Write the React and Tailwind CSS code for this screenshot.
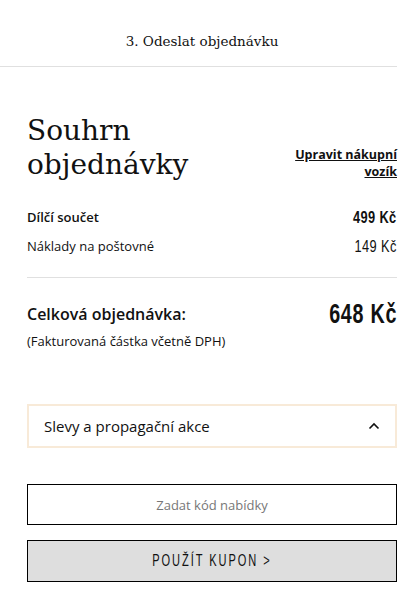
import React from 'react';

const slab = { fontFamily: '"DejaVu Serif", "Liberation Serif", serif' };
const sans = { fontFamily: '"Open Sans", "Noto Sans", sans-serif' };
const narrow = { fontFamily: '"Liberation Sans", Arial, sans-serif' };

const App = () => {
  return (
    <div className="w-[416px] h-[606px] bg-white text-[#111] overflow-hidden" style={sans}>
      {/* Krok pokladny */}
      <div className="h-[67px] w-[397px] border-b border-[#e0e0e0] flex items-center justify-center pl-[7px]">
        <span className="text-[13.5px] pt-[16px]" style={slab}>3. Odeslat objednávku</span>
      </div>

      <div className="w-[416px] pl-[27px] pr-[19px]">
        {/* Nadpis */}
        <div className="flex items-end justify-between pt-[47px]">
          <h1 className="text-[28px] leading-[34px] font-light" style={slab}>Souhrn<br />objednávky</h1>
          <a href="#" className="text-[12.5px] leading-[17px] font-bold underline text-right mb-[2px]">
            Upravit nákupní<br />vozík
          </a>
        </div>

        {/* Položky */}
        <div className="mt-[25px] flex flex-col gap-[8px] pb-[20px] border-b border-[#e0e0e0]">
          <div className="flex items-center justify-between h-[21px]">
            <span className="text-[13px] font-semibold">Dílčí součet</span>
            <span className="inline-block text-[16px] font-bold tracking-[0.5px] scale-x-[0.8] origin-right" style={narrow}>499 Kč</span>
          </div>
          <div className="flex items-center justify-between h-[21px]">
            <span className="text-[13px]">Náklady na poštovné</span>
            <span className="inline-block text-[16px] tracking-[0.5px] scale-x-[0.8] origin-right" style={narrow}>149 Kč</span>
          </div>
        </div>

        {/* Celkem */}
        <div className="mt-[22px] h-[28px] flex items-center justify-between">
          <span className="text-[16px] font-semibold">Celková objednávka:</span>
          <span className="inline-block text-[27px] font-bold tracking-[1px] scale-x-[0.73] origin-right" style={narrow}>648 Kč</span>
        </div>
        <p className="text-[13px] leading-[18px] mt-[4px]">(Fakturovaná částka včetně DPH)</p>

        {/* Slevy */}
        <div className="mt-[54px] h-[44px] border-2 border-[#f8ead8] flex items-center justify-between pl-[15px] pr-[15px]">
          <span className="text-[15px]">Slevy a propagační akce</span>
          <svg width="12" height="8" viewBox="0 0 12 8" fill="none" stroke="#111" strokeWidth="1.6">
            <path d="M1.5 6.5 6 2l4.5 4.5" />
          </svg>
        </div>

        {/* Kupon */}
        <input
          type="text"
          placeholder="Zadat kód nabídky"
          className="mt-[36px] block w-full h-[41px] border-[1.5px] border-black text-center text-[13px] placeholder:text-[#777] outline-none"
          style={sans}
        />
        <button className="mt-[15px] w-full h-[42px] border-[1.5px] border-black bg-[#dedede] flex items-center justify-center">
          <span className="inline-block text-[17px] tracking-[3px] scale-x-[0.65]" style={narrow}>POUŽÍT KUPON &gt;</span>
        </button>
      </div>
    </div>
  );
};

export default App;
